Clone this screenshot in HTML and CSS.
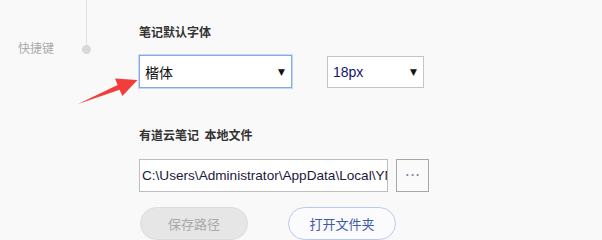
FILE: index.html
```html
<!DOCTYPE html>
<html lang="zh-CN">
<head>
  <meta charset="UTF-8">
  <title>设置</title>
  <link rel="stylesheet" href="styles.css">
</head>
<body>
  <div class="page">
    <div class="nav">
      <div class="nav-line"></div>
      <div class="nav-item">
        <span class="nav-label">快捷键</span>
        <span class="nav-dot"></span>
      </div>
    </div>

    <div class="settings">
      <div class="section-title">笔记默认字体</div>
      <div class="select-row">
        <div class="select select-font focused">
          <span>楷体</span>
          <span class="caret">▼</span>
        </div>
        <div class="select select-size">
          <span>18px</span>
          <span class="caret">▼</span>
        </div>
      </div>

      <div class="section-title second">有道云笔记&nbsp;&nbsp;本地文件</div>
      <div class="path-row">
        <div class="path-input">C:\Users\Administrator\AppData\Local\YNote</div>
        <button class="browse-button">···</button>
      </div>

      <div class="action-row">
        <button class="round-button disabled">保存路径</button>
        <button class="round-button outline">打开文件夹</button>
      </div>
    </div>
  </div>

  <svg class="arrow" width="602" height="240" viewBox="0 0 602 240">
    <polygon points="78,104 117.6,85 115,78.6 137.5,80 122.4,96 119.6,89.8" fill="#f43c3a"/>
  </svg>
</body>
</html>
```

FILE: styles.css
```css
body {
  margin: 0;
  background: #f9f9f9;
  font-family: "Noto Sans CJK SC", "Liberation Sans", sans-serif;
  color: #333;
  overflow: hidden;
}

.page {
  display: flex;
  height: 240px;
}

.nav {
  width: 139px;
  padding-left: 18px;
  box-sizing: border-box;
}

.nav-line {
  margin-left: 68px;
  width: 1px;
  height: 45px;
  background: #dedede;
}

.nav-item {
  display: flex;
  align-items: center;
  height: 9px;
}

.nav-label {
  width: 64px;
  font-size: 12px;
  color: #aaa;
  line-height: 16px;
  margin-top: -3px;
}

.nav-dot {
  width: 9px;
  height: 9px;
  border-radius: 50%;
  background: #d9d9d9;
}

.settings {
  flex: 1;
  padding-top: 24px;
}

.section-title {
  font-size: 12px;
  font-weight: bold;
  line-height: 16px;
  color: #333;
}

.section-title.second {
  margin-top: 39px;
}

.select-row {
  display: flex;
  align-items: flex-start;
  gap: 35px;
  margin-top: 15px;
}

.select {
  display: flex;
  align-items: center;
  justify-content: space-between;
  box-sizing: border-box;
  height: 32px;
  padding: 0 6px 0 5px;
  border: 1px solid #c4c4c4;
  background: #fff;
  font-size: 14px;
  color: #111;
}

.select-font {
  width: 153px;
  height: 33px;
}

.select-size {
  width: 97px;
  margin-top: 1px;
  font-family: "Liberation Sans", sans-serif;
  color: #14146e;
}

.select.focused {
  border: 1px solid #86a9e6;
  box-shadow: 0 0 0 1px #c7d8f5;
}

.caret {
  font-size: 9px;
  color: #111;
  font-family: "DejaVu Sans", sans-serif;
}

.path-row {
  display: flex;
  gap: 8px;
  margin-top: 16px;
}

.path-input {
  width: 249px;
  height: 33px;
  box-sizing: border-box;
  border: 1px solid #bdbdbd;
  background: #fff;
  padding-left: 2px;
  font-family: "Liberation Sans", sans-serif;
  font-size: 13.6px;
  line-height: 31px;
  color: #1a1a3a;
  white-space: nowrap;
  overflow: hidden;
}

.browse-button {
  width: 33px;
  height: 33px;
  box-sizing: border-box;
  border: 1px solid #a8a8a8;
  background: #fafafa;
  color: #7c88a8;
  font-size: 16px;
  line-height: 1;
  padding: 0;
  font-family: "DejaVu Sans", sans-serif;
}

.action-row {
  display: flex;
  gap: 40px;
  margin-top: 15px;
  padding-left: 1px;
}

.round-button {
  width: 108px;
  height: 33px;
  border-radius: 17px;
  font-size: 13px;
  font-family: "Noto Sans CJK SC", sans-serif;
  padding: 0;
}

.round-button.disabled {
  background: #e6e6e6;
  border: 1px solid #dcdcdc;
  color: #a9a9a9;
}

.round-button.outline {
  background: #fbfbfd;
  border: 1px solid #b9c9ee;
  color: #3f5aa8;
}

.arrow {
  position: absolute;
  left: 0;
  top: 0;
  pointer-events: none;
}
```
